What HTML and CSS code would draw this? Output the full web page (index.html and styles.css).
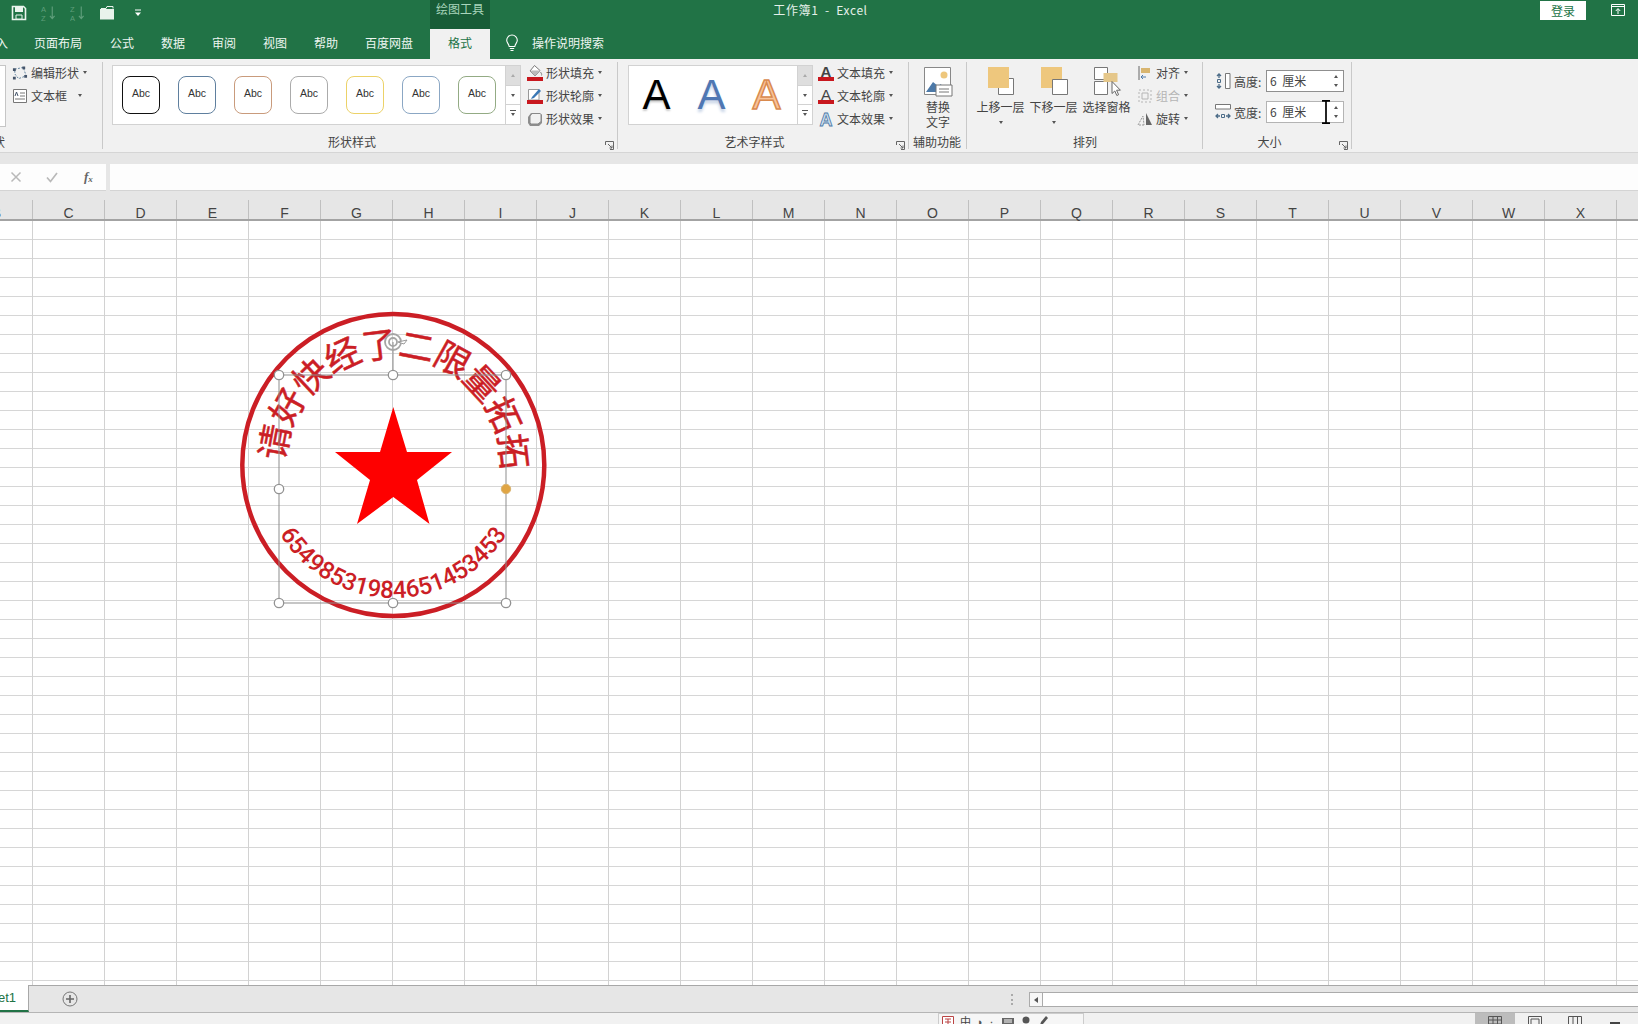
FILE: index.html
```html
<!DOCTYPE html>
<html lang="zh-CN">
<head>
<meta charset="utf-8">
<title>工作簿1 - Excel</title>
<link rel="stylesheet" href="styles.css">
</head>
<body>
<div class="app">
  <header class="titlebar">
    <div class="qat">
      <svg class="qi save" viewBox="0 0 16 16"><path d="M1.500 1.500h11l2 2v11h-13z" fill="none" stroke="#eaf5ee" stroke-width="1.600"/><path d="M4 2h8v5H4z" fill="#eaf5ee"/><path d="M5 10h6v4H5z" fill="#217346" stroke="#eaf5ee"/></svg>
      <svg class="qi sort" viewBox="0 0 16 18"><text x="0" y="8" class="qt">A</text><text x="0" y="17" class="qt">Z</text><path d="M12 2v13M9.500 12l2.500 3 2.500-3" fill="none" stroke="#5f9e7b" stroke-width="1.200"/></svg>
      <svg class="qi sort" viewBox="0 0 16 18"><text x="0" y="8" class="qt">Z</text><text x="0" y="17" class="qt">A</text><path d="M12 2v13M9.500 12l2.500 3 2.500-3" fill="none" stroke="#5f9e7b" stroke-width="1.200"/></svg>
      <svg class="qi folder" viewBox="0 0 16 16"><path d="M1 4h14v10.500H1z" fill="#e8f3ec"/><path d="M2 3.500h5l1-2h6v2" fill="none" stroke="#e8f3ec"/></svg>
      <svg class="qi more" viewBox="0 0 8 8"><path d="M1 1h6" stroke="#fff"/><path d="M1 3.500h6L4 7z" fill="#fff"/></svg>
    </div>
    <div class="context-label">绘图工具</div>
    <div class="doc-title">工作簿1&nbsp; - &nbsp;Excel</div>
    <button class="login">登录</button>
    <svg class="restore" viewBox="0 0 14 12"><path d="M.5 .5h13v11H.5zM.5 2.500h13" fill="none" stroke="#fff"/><path d="M7 10V5M4.800 7L7 4.500 9.200 7" fill="none" stroke="#fff"/></svg>
  </header>

  <nav class="tabs">
    <span class="tab tab-clip"><span>插入</span></span>
    <span class="tab">页面布局</span>
    <span class="tab">公式</span>
    <span class="tab">数据</span>
    <span class="tab">审阅</span>
    <span class="tab">视图</span>
    <span class="tab">帮助</span>
    <span class="tab">百度网盘</span>
    <span class="tab tab-active">格式</span>
    <svg class="bulb" viewBox="0 0 14 18"><path d="M7 1a5.300 5.300 0 0 0-5.300 5.300c0 2.400 2 3.400 2.500 6.200h5.600c.5-2.800 2.500-3.800 2.500-6.200A5.300 5.300 0 0 0 7 1zM4.800 14.500h4.400M5.500 16.500h3" fill="none" stroke="#fff" stroke-width="1.100"/></svg>
    <span class="tab tab-search">操作说明搜索</span>
  </nav>

  <section class="ribbon">
    <div class="group g1">
      <div class="group-body">
        <div class="stub"></div>
        <div class="cmds">
          <div class="cmd"><svg class="ic" viewBox="0 0 17 16"><path d="M3 4l9-2 3 9-8 3-4-5z" fill="none" stroke="#5a7d9a" stroke-dasharray="2 1.500"/><path d="M1 3h3v3H1zM11 1h3v3h-3zM13 10h3v3h-3zM1 12h3v3H1z" fill="#44546a"/></svg><span>编辑形状</span><i class="caret"></i></div>
          <div class="cmd"><svg class="ic" viewBox="0 0 16 16"><path d="M1.500 1.500h13v13h-13z" fill="#fff" stroke="#777"/><path d="M8 5h5M8 8h5M3 11h10" stroke="#777"/><path d="M3 8l1.500-4L6 8" fill="none" stroke="#44546a"/></svg><span class="wide">文本框</span><i class="caret"></i></div>
        </div>
      </div>
      <div class="group-label label-clip"><span>插入形状</span></div>
    </div>

    <div class="group g2">
      <div class="group-body">
        <div class="gallery shape-gallery">
          <div class="abc c-black">Abc</div>
          <div class="abc c-navy">Abc</div>
          <div class="abc c-orange">Abc</div>
          <div class="abc c-gray">Abc</div>
          <div class="abc c-yellow">Abc</div>
          <div class="abc c-blue">Abc</div>
          <div class="abc c-green">Abc</div>
        </div>
        <div class="gal-scroll">
          <div class="gs gs-up"><i class="tri-up"></i></div>
          <div class="gs"><i class="caret"></i></div>
          <div class="gs gs-more"><i class="caret"></i></div>
        </div>
        <div class="cmds cmds-gal">
          <div class="cmd"><svg class="ic" viewBox="0 0 16 16"><path d="M7.500 .5l5.500 5-5 5.500-5-5z" fill="#fff" stroke="#777"/><path d="M5 5.500h8L8 11 3 6z" fill="#bbb"/><path d="M13.500 7c1 1.500 1.500 2.500 1 3.500" stroke="#888" fill="none"/><path d="M0 12h16v4H0z" fill="#c8171e"/></svg><span>形状填充</span><i class="caret"></i></div>
          <div class="cmd"><svg class="ic" viewBox="0 0 16 16"><path d="M1.500 1.500h10.500v10.500H1.500z" fill="#fff" stroke="#999"/><path d="M5 9l7-8 2 2-7 7-3 1z" fill="#3a78b5"/><path d="M0 12h16v4H0z" fill="#c8171e"/></svg><span>形状轮廓</span><i class="caret"></i></div>
          <div class="cmd"><svg class="ic" viewBox="0 0 16 16"><path d="M4 2h9l2 2v8l-3 3H3l-2-3V6z" fill="#8e8e8e"/><path d="M5 2.500h8l1 1v7l-3 2.500H4l-1-1V5z" fill="#f1f1f1" stroke="#888"/></svg><span>形状效果</span><i class="caret"></i></div>
        </div>
      </div>
      <div class="group-label">形状样式</div>
      <svg class="launcher" viewBox="0 0 9 9"><path d="M.5 4V.5H8.500V8.500H5M3 3l4 4M7 4.500V7H4.500" fill="none" stroke="#666"/></svg>
    </div>

    <div class="group g3">
      <div class="group-body">
        <div class="gallery art-gallery">
          <span class="art art-black">A</span>
          <span class="art art-blue">A</span>
          <span class="art art-orange">A</span>
        </div>
        <div class="gal-scroll">
          <div class="gs gs-up"><i class="tri-up"></i></div>
          <div class="gs"><i class="caret"></i></div>
          <div class="gs gs-more"><i class="caret"></i></div>
        </div>
        <div class="cmds cmds-art">
          <div class="cmd"><svg class="ic" viewBox="0 0 16 16"><text x="8" y="12" class="ica">A</text><path d="M0 12h16v4H0z" fill="#c8171e"/></svg><span>文本填充</span><i class="caret"></i></div>
          <div class="cmd"><svg class="ic" viewBox="0 0 16 16"><text x="8" y="12" class="ica ica-o">A</text><path d="M0 12h16v4H0z" fill="#c8171e"/></svg><span>文本轮廓</span><i class="caret"></i></div>
          <div class="cmd"><svg class="ic" viewBox="0 0 16 16"><text x="8" y="14.500" class="ica ica-b">A</text></svg><span>文本效果</span><i class="caret"></i></div>
        </div>
      </div>
      <div class="group-label">艺术字样式</div>
      <svg class="launcher" viewBox="0 0 9 9"><path d="M.5 4V.5H8.500V8.500H5M3 3l4 4M7 4.500V7H4.500" fill="none" stroke="#666"/></svg>
    </div>

    <div class="group g4">
      <div class="group-body">
        <div class="big">
          <svg class="big-ic" viewBox="0 0 30 30"><path d="M1.500 .5h26v27h-26z" fill="#fff" stroke="#888"/><circle cx="21" cy="8" r="3.500" fill="#eec77d"/><path d="M3 25l7-10 5 4 3-2 3 8z" fill="#4c79a8"/><path d="M13 18h16v11H13z" fill="#fff" stroke="#777"/><path d="M16 22h10M16 25h10" stroke="#777"/></svg>
          <span>替换</span><span>文字</span>
        </div>
      </div>
      <div class="group-label">辅助功能</div>
    </div>

    <div class="group g5">
      <div class="group-body">
        <div class="big big-arr">
          <svg class="big-ic" viewBox="0 0 30 30"><path d="M12.500 11.500h15v16h-15z" fill="#fff" stroke="#777"/><path d="M2 0h21v21H2z" fill="#eec77d"/></svg>
          <span>上移一层</span><i class="caret"></i>
        </div>
        <div class="big big-arr">
          <svg class="big-ic" viewBox="0 0 30 30"><path d="M2 0h21v21H2z" fill="#eec77d"/><path d="M13.500 12.500h15v15h-15z" fill="#fff" stroke="#777"/></svg>
          <span>下移一层</span><i class="caret"></i>
        </div>
        <div class="big big-arr">
          <svg class="big-ic" viewBox="0 0 30 30"><path d="M2.500 .5h13v12h-13zM2.500 14.500h13v13h-13z" fill="#fff" stroke="#777"/><path d="M11.500 6h14v9h-14z" fill="#e5c78a"/><path d="M20 14.500v12l2.800-2.500 2 4.500 1.800-.8-2-4.500h3.800z" fill="#fff" stroke="#666"/></svg>
          <span>选择窗格</span>
        </div>
        <div class="cmds cmds-arr">
          <div class="cmd"><svg class="ic" viewBox="0 0 16 16"><path d="M2 1v14" stroke="#666"/><path d="M4 3h9v5H4z" fill="#d8b56f"/><path d="M9 12H4M6 10l-2 2 2 2" fill="none" stroke="#4c79a8"/></svg><span class="short">对齐</span><i class="caret"></i></div>
          <div class="cmd cmd-off"><svg class="ic" viewBox="0 0 16 16"><path d="M2 2h12v12H2z" fill="none" stroke="#b5b5b5" stroke-dasharray="2 2"/><path d="M5 5h6v6H5z" fill="none" stroke="#b5b5b5"/></svg><span class="short">组合</span><i class="caret"></i></div>
          <div class="cmd"><svg class="ic" viewBox="0 0 16 16"><path d="M9 2l6 12H9z" fill="#666"/><path d="M7 14H1l5-9z" fill="none" stroke="#999" stroke-dasharray="2 1"/></svg><span class="short">旋转</span><i class="caret"></i></div>
        </div>
      </div>
      <div class="group-label">排列</div>
    </div>

    <div class="group g6">
      <div class="group-body size-body">
        <div class="size-row">
          <svg class="ic" viewBox="0 0 16 16"><path d="M10.500 .5h4.500v15h-4.500z" fill="#fff" stroke="#777"/><path d="M4 1v4M2 3l2-2 2 2M4 15v-4M2 13l2 2 2-2" fill="none" stroke="#4c6c88" stroke-width="1.300"/><path d="M2.500 6.500h3v3h-3z" fill="none" stroke="#4c6c88"/></svg>
          <span class="size-name">高度:</span>
          <div class="spin">6 厘米<i class="spin-btns"><b class="tri-up"></b><b class="caret"></b></i></div>
        </div>
        <div class="size-row">
          <svg class="ic" viewBox="0 0 16 16"><path d="M.5 .5h15v4.500H.5z" fill="#fff" stroke="#777"/><path d="M1 12h4M3 10l-2 2 2 2M15 12h-4M13 10l2 2-2 2" fill="none" stroke="#4c6c88" stroke-width="1.300"/><path d="M6.500 10.500h3v3h-3z" fill="none" stroke="#4c6c88"/></svg>
          <span class="size-name">宽度:</span>
          <div class="spin spin-soft">6 厘米<svg class="ibeam" viewBox="0 0 10 24"><path d="M1 .8h8M1 23.200h8M5 .8v22.400" fill="none" stroke="#000" stroke-width="1.700"/></svg><i class="spin-btns"><b class="tri-up"></b><b class="caret"></b></i></div>
        </div>
      </div>
      <div class="group-label">大小</div>
      <svg class="launcher" viewBox="0 0 9 9"><path d="M.5 4V.5H8.500V8.500H5M3 3l4 4M7 4.500V7H4.500" fill="none" stroke="#666"/></svg>
    </div>
  </section>

  <div class="band"></div>

  <div class="formula">
    <div class="fx-box">
      <svg class="fx-ic" viewBox="0 0 12 12"><path d="M1.500 1.500l9 9M10.500 1.500l-9 9" stroke="#b9b9b9" stroke-width="1.500"/></svg>
      <svg class="fx-ic" viewBox="0 0 12 12"><path d="M1 6.500l3.500 4L11 2" fill="none" stroke="#b9b9b9" stroke-width="1.700"/></svg>
      <span class="fx">f<sub>x</sub></span>
    </div>
    <div class="fx-input"></div>
  </div>

  <div class="col-head">
    <span>B</span><span>C</span><span>D</span><span>E</span><span>F</span><span>G</span><span>H</span><span>I</span><span>J</span><span>K</span><span>L</span><span>M</span><span>N</span><span>O</span><span>P</span><span>Q</span><span>R</span><span>S</span><span>T</span><span>U</span><span>V</span><span>W</span><span>X</span>
  </div>

  <main class="sheet">
    <svg class="stamp" viewBox="230 300 340 340">
      <defs>
        <path id="arcTop" d="M291.800 501.900A108 108 0 1 1 494.800 501.900"/>
        <path id="arcBottom" d="M260.300 465A133 133 0 0 0 526.300 465"/>
      </defs>
      <circle cx="393.300" cy="465" r="151" fill="none" stroke="#cb1e25" stroke-width="4.500"/>
      <path d="M393.300 407L407 452H452L417 480L429.500 524L393.300 497L357 524L370 480L335 452H380Z" fill="#fe0000"/>
      <text class="stamp-cn" transform="rotate(2 393.300 465)"><textPath href="#arcTop" startOffset="50%">请好快经了二限量拓拓</textPath></text>
      <text class="stamp-num"><textPath href="#arcBottom" startOffset="50%">65498531984651453453</textPath></text>
      <path class="sel" d="M279 375H506V603H279ZM393 342V375"/>
      <g class="rot"><circle cx="393" cy="342" r="8"/><circle cx="393" cy="342" r="4"/></g>
      <path d="M398 342l6 2 3-4z" fill="#fff" stroke="#9a9a9a"/>
      <g class="hnd"><circle cx="279" cy="375" r="4.700"/><circle cx="393" cy="375" r="4.700"/><circle cx="506" cy="375" r="4.700"/><circle cx="279" cy="489" r="4.700"/><circle cx="279" cy="603" r="4.700"/><circle cx="393" cy="603" r="4.700"/><circle cx="506" cy="603" r="4.700"/></g>
      <circle class="hnd-adj" cx="506" cy="489" r="4.700"/>
    </svg>
  </main>

  <div class="sheetbar">
    <div class="sheet-tab"><span>Sheet1</span></div>
    <svg class="add" viewBox="0 0 16 16"><circle cx="8" cy="8" r="7" fill="none" stroke="#777"/><path d="M8 4v8M4 8h8" stroke="#666" stroke-width="1.600"/></svg>
    <div class="dots"></div>
    <div class="hscroll"><div class="hbtn"><i class="tri-left"></i></div><div class="htrack"></div></div>
  </div>

  <footer class="status">
    <div class="ime">
      <svg class="ime-ic" viewBox="0 0 12 12"><path d="M.5 .5h11v11H.5z" fill="#fff" stroke="#b44"/><path d="M3 3h6M3 6h6M6 3v7" stroke="#b44"/></svg>
      <span>中</span><span class="ime-s">◗</span><span class="ime-s">⸱,</span>
      <svg class="ime-ic" viewBox="0 0 12 12"><path d="M0 2h12v8H0z" fill="#666"/><path d="M2 4h8M2 6h8" stroke="#fff"/></svg>
      <svg class="ime-ic" viewBox="0 0 12 12"><circle cx="6" cy="4" r="3.500" fill="#555"/></svg>
      <svg class="ime-ic" viewBox="0 0 12 12"><path d="M8 0l2 2-5 6-3 1 1-3z" fill="#555"/></svg>
    </div>
    <div class="views">
      <div class="view view-on"><svg viewBox="0 0 14 12"><path d="M.5 .5h13v11H.5zM.5 4h13M.5 8h13M5 .5v11M9.500 .5v11" fill="none" stroke="#555"/></svg></div>
      <div class="view"><svg viewBox="0 0 14 12"><path d="M.5 .5h13v11H.5zM3 3h8v9H3z" fill="none" stroke="#555"/></svg></div>
      <div class="view"><svg viewBox="0 0 14 12"><path d="M.5 .5h13v11H.5zM5 .5v11M9.500 .5v11" fill="none" stroke="#555"/></svg></div>
      <div class="view"><i class="minus"></i></div>
    </div>
  </footer>
</div>
</body>
</html>
```

FILE: styles.css
```css
* { box-sizing: border-box; }
html, body { margin: 0; padding: 0; overflow: hidden; }
body { width: 1638px; height: 1024px; background: #fff; font-family: "Noto Sans CJK SC", "Liberation Sans", sans-serif; font-size: 12px; color: #444; }
.app { width: 1638px; height: 1024px; display: flex; flex-direction: column; overflow: hidden; }
i { display: block; font-style: normal; }

/* title bar */
.titlebar { height: 29px; flex: none; background: #217346; display: flex; align-items: center; position: relative; color: #e4f0e9; }
.qat { display: flex; align-items: center; padding-left: 11px; width: 430px; height: 100%; padding-bottom: 3px; flex: none; }
.qi { display: block; }
.save { width: 16px; height: 16px; margin-right: 14px; }
.sort { width: 15px; height: 18px; margin-right: 14px; }
.folder { width: 16px; height: 16px; margin-right: 19px; }
.more { width: 8px; height: 8px; }
.qt { font: 8px "Liberation Sans", sans-serif; fill: #5f9e7b; }
.context-label { width: 60px; height: 29px; background: #185c37; color: #a9d5bb; text-align: center; line-height: 18px; font-size: 12px; flex: none; }
.doc-title { line-height: 19px; height: 29px; font-size: 12px; white-space: nowrap; width: 127px; margin-left: 267px; text-align: center; letter-spacing: .6px; flex: none; }
.login { width: 46px; height: 19px; margin-left: 656px; margin-top: -8px; padding: 0; border: 0; background: #fff; color: #217346; font: 12px/19px "Noto Sans CJK SC", sans-serif; flex: none; }
.restore { width: 14px; height: 12px; margin-left: 25px; margin-top: -9px; flex: none; }

/* tabs */
.tabs { height: 30px; flex: none; background: #217346; display: flex; align-items: stretch; color: #eef6f1; line-height: 28px; }
.tab { display: block; white-space: nowrap; margin-right: 27px; }
.tab-clip { width: 8px; overflow: hidden; display: flex; justify-content: flex-end; margin-right: 26px; }
.tab-clip span { flex: none; }
.tabs .tab:nth-child(2) { margin-right: 28px; }
.tabs .tab:nth-child(8) { margin-right: 17px; }
.tab-active { width: 60px; margin: 0; text-align: center; background: #f1f1f1; color: #217346; }
.bulb { width: 14px; height: 18px; margin: 5px 0 0 15px; }
.tab-search { margin-left: 13px; margin-right: 0; }

/* ribbon */
.ribbon { height: 94px; flex: none; background: #f1f1f1; border-bottom: 1px solid #d5d5d5; display: flex; }
.group { position: relative; display: flex; flex-direction: column; height: 93px; flex: none; }
.group::after { content: ""; position: absolute; right: 0; top: 3px; bottom: 3px; width: 1px; background: #c9c9c9; }
.group-body { flex: 1; display: flex; align-items: flex-start; padding-top: 3px; min-height: 0; }
.group-label { height: 20px; line-height: 20px; text-align: center; flex: none; white-space: nowrap; }
.label-clip { width: 5px; overflow: hidden; display: flex; justify-content: flex-end; }
.label-clip span { flex: none; }
.launcher { position: absolute; right: 4px; bottom: 2px; width: 9px; height: 9px; }
.g1 { width: 103px; }
.g2 { width: 515px; padding-left: 9px; }
.g3 { width: 291px; padding-left: 10px; }
.g4 { width: 58px; }
.g5 { width: 236px; padding-left: 7px; }
.g6 { width: 149px; padding-left: 12px; }
.g2 .group-label { padding-right: 26px; }
.g3 .group-label { padding-right: 28px; }
.g4 .group-label { padding-right: 2px; }
.g5 .group-label { padding-right: 7px; }
.g6 .group-label { padding-right: 28px; }

.stub { width: 6px; height: 62px; margin-top: 3px; background: #fff; border: 1px solid #c6c6c6; border-left: 0; flex: none; }
.cmds { display: flex; flex-direction: column; flex: none; margin-left: 6px; margin-top: -1px; }
.cmd { display: flex; align-items: center; height: 23px; white-space: nowrap; }
.cmd span { width: 48px; margin-left: 3px; }
.cmd span.wide { width: 43px; }
.cmd span.short { width: 24px; }
.cmd .caret { margin-left: 4px; }
.cmd-off { color: #b5b5b5; }
.ic { width: 16px; height: 16px; flex: none; display: block; }
.ica { font: 700 15px "Liberation Sans", sans-serif; text-anchor: middle; fill: #444; }
.ica-o { font-weight: 400; }
.ica-b { font-size: 18px; fill: #cfe0ee; stroke: #4c79a8; stroke-width: .8; }
.caret { width: 0; height: 0; border-left: 2.5px solid transparent; border-right: 2.5px solid transparent; border-top: 3px solid #555; }
.tri-up { width: 0; height: 0; border-left: 2.5px solid transparent; border-right: 2.5px solid transparent; border-bottom: 3px solid #555; }
.tri-left { width: 0; height: 0; border-top: 3.5px solid transparent; border-bottom: 3.5px solid transparent; border-right: 4px solid #555; }

.gallery { height: 60px; margin-top: 3px; background: #fff; border: 1px solid #d2d2d2; flex: none; display: flex; }
.shape-gallery { width: 394px; padding: 10px 0 0 9px; gap: 18px; }
.abc { width: 38px; height: 38px; border: 1.5px solid; border-radius: 8px; text-align: center; font: 10.5px/33px "Liberation Sans", sans-serif; color: #333; }
.c-black { border-color: #111; }
.c-navy { border-color: #5f7f9e; }
.c-orange { border-color: #c99b7c; }
.c-gray { border-color: #ababab; }
.c-yellow { border-color: #ecd268; }
.c-blue { border-color: #8ba7c4; }
.c-green { border-color: #93ab84; }
.gal-scroll { width: 15px; height: 60px; margin-top: 3px; display: flex; flex-direction: column; flex: none; }
.gs { flex: 1; background: #fff; border: 1px solid #d2d2d2; border-left: 0; display: flex; align-items: center; justify-content: center; margin-top: -1px; }
.gs:first-child { margin-top: 0; }
.gs-up { background: #dedede; }
.gs-up .tri-up { border-bottom-color: #aaa; }
.gs-more { position: relative; }
.gs-more::before { content: ""; position: absolute; left: 4px; right: 4px; top: 5px; height: 1px; background: #555; }
.cmds-gal { margin-left: 6px; }
.art-gallery { width: 170px; justify-content: center; align-items: center; padding-right: 3px; }
.art { width: 56px; text-align: center; font: 42px/54px "Liberation Sans", sans-serif; }
.art-black { color: #000; text-shadow: 0 2px 2px #ccc; }
.art-blue { color: #4f77b3; text-shadow: 0 3px 3px #c6d3e6; }
.art-orange { color: #f8c39a; -webkit-text-stroke: 1.5px #d98a4e; }
.cmds-art { margin-left: 5px; }

.big { display: flex; flex-direction: column; align-items: center; width: 58px; line-height: 15px; padding-top: 5px; flex: none; }
.big-ic { width: 30px; height: 30px; display: block; margin-bottom: 1.5px; flex: none; }
.big-arr { width: 53px; white-space: nowrap; }
.big-arr .caret { margin-top: 7.5px; }
.cmds-arr { margin-left: 4px; }

.size-body { flex-direction: column; padding-top: 11px; gap: 9px; }
.size-row { display: flex; align-items: center; height: 22px; }
.size-name { width: 28px; margin-left: 3px; margin-right: 4px; white-space: nowrap; }
.spin { width: 78px; height: 22px; background: #fff; border: 1px solid #8f8f8f; padding-left: 3px; line-height: 20px; position: relative; color: #444; word-spacing: 3px; }
.spin-soft { border-color: #b4b4b4; }
.spin-btns { position: absolute; right: 5px; top: 4px; bottom: 4px; display: flex; flex-direction: column; justify-content: space-between; }
.spin-btns b { display: block; }
.ibeam { position: absolute; left: 54px; top: -2px; width: 10px; height: 24px; }

/* formula bar */
.band { height: 11px; flex: none; background: #e6e6e6; }
.formula { height: 27px; flex: none; display: flex; gap: 4px; background: #e6e6e6; }
.fx-box { width: 106px; background: #fdfdfd; border-bottom: 1px solid #d4d4d4; display: flex; align-items: center; padding-left: 10px; }
.fx-ic { width: 12px; height: 12px; margin-right: 24px; flex: none; }
.fx { font: italic 700 13px "Liberation Serif", serif; color: #666; margin-left: 2px; }
.fx sub { font-size: 9px; vertical-align: -1px; line-height: 0; }
.fx-input { flex: 1; background: #fdfdfd; border-bottom: 1px solid #d4d4d4; }

/* column headers */
.col-head { height: 30px; flex: none; background: #e6e6e6; border-bottom: 2px solid #a3a3a3; display: flex; margin-left: -39px; padding-top: 9px; width: 1740px; color: #444; }
.col-head span { width: 72px; flex: none; border-right: 1px solid #c0c0c0; text-align: center; font: 14px/26px "Liberation Sans", sans-serif; }

/* grid */
.sheet { flex: 1; position: relative; background-color: #fff;
  background-image: linear-gradient(to right, #d2d2d2 1px, transparent 1px), linear-gradient(to bottom, #d6d6d6 1px, transparent 1px);
  background-size: 72px 19px; background-position: 32px -1px; }
.stamp { position: absolute; left: 230px; top: 79px; width: 340px; height: 340px; overflow: visible; }
.stamp-cn { font: 400 35px "Noto Sans CJK SC", sans-serif; fill: #cb1e25; stroke: #cb1e25; stroke-width: .5; text-anchor: middle; letter-spacing: -1px; }
.stamp-num { font: 500 24px Roboto, "Liberation Sans", sans-serif; fill: #cb1e25; text-anchor: middle; letter-spacing: 0; }
.sel { fill: none; stroke: #8d8d8d; stroke-width: 1; }
.rot circle { fill: none; stroke: #a5a5a5; stroke-width: 1.8; }
.hnd circle { fill: #fff; stroke: #929292; stroke-width: 1.3; }
.hnd-adj { fill: #e0a544; stroke: #d9b36f; }

/* sheet tabs */
.sheetbar { height: 28px; flex: none; background: #e6e6e6; border-top: 1px solid #a8a8a8; border-bottom: 1px solid #b5b5b5; display: flex; align-items: flex-start; position: relative; }
.sheet-tab { width: 29px; height: 27px; background: #fff; border-bottom: 2px solid #217346; border-right: 1px solid #a8a8a8; display: flex; justify-content: flex-end; overflow: hidden; padding-right: 12px; margin-top: -1px; color: #217346; flex: none; font: 13px/26px "Liberation Sans", sans-serif; }
.sheet-tab span { flex: none; }
.add { width: 16px; height: 16px; margin: 5px 0 0 33px; flex: none; }
.dots { width: 2px; height: 11px; margin: 8px 0 0 933px; border-left: 2px dotted #aaa; flex: none; }
.hscroll { display: flex; height: 15px; margin: 6px 0 0 16px; flex: 1; }
.hbtn { width: 14px; background: #f7f7f7; border: 1px solid #ababab; display: flex; align-items: center; justify-content: center; flex: none; }
.htrack { flex: 1; background: #fff; border-top: 1px solid #ababab; border-bottom: 1px solid #ababab; }

/* status */
.status { height: 11px; flex: none; background: #f1f1f1; display: flex; overflow: hidden; }
.ime { display: flex; align-items: flex-start; gap: 6px; margin-left: 938px; width: 146px; height: 22px; background: #f6f6f6; border: 1px solid #ccc; border-bottom: 0; padding-left: 3px; font-size: 11px; line-height: 14px; flex: none; }
.ime-ic { width: 12px; height: 12px; margin-top: 2px; flex: none; }
.ime-s { color: #555; }
.views { display: flex; margin-left: 391px; flex: none; }
.view { width: 40px; height: 11px; display: flex; justify-content: center; padding-top: 3px; flex: none; }
.view svg { width: 14px; height: 12px; flex: none; }
.view-on { background: #bcbcbc; }
.minus { width: 10px; height: 2px; background: #444; margin-top: 6px; }
```
